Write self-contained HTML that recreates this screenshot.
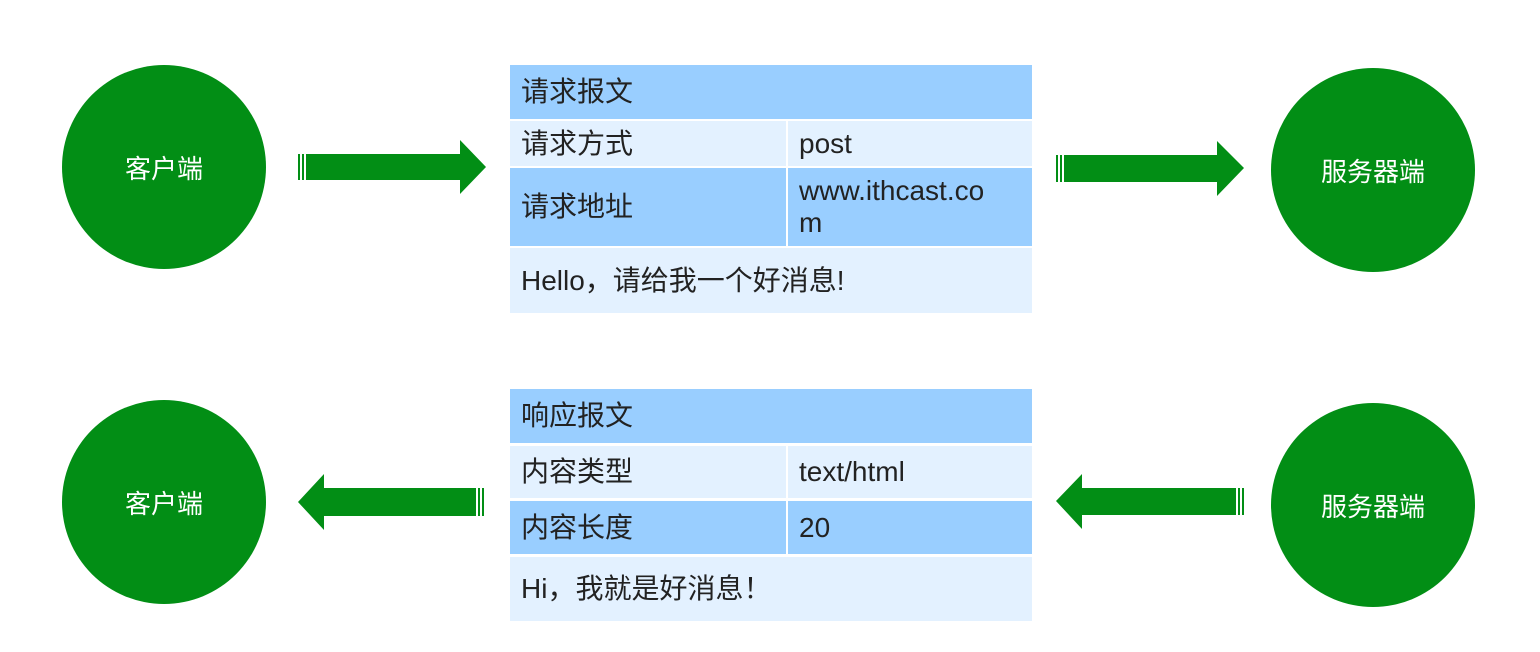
<!DOCTYPE html>
<html><head><meta charset="utf-8"><style>
html,body{margin:0;padding:0;background:#fff;width:1540px;height:652px;overflow:hidden;position:relative;font-family:"Liberation Sans","Noto Sans CJK SC",sans-serif;}
.c{position:absolute;width:204px;height:204px;border-radius:50%;background:#028e15;color:#fff;font-size:26px;display:flex;align-items:center;justify-content:center;}
.b{position:absolute;box-sizing:border-box;padding-left:11px;font-size:28px;color:#222;display:flex;align-items:center;line-height:32px;}
.d{background:#99ceff}.l{background:#e3f1ff}
svg{position:absolute;left:0;top:0}
</style></head><body>
<div class="c" style="left:62px;top:65px">客户端</div>
<div class="c" style="left:1271px;top:68px">服务器端</div>
<div class="c" style="left:62px;top:400px">客户端</div>
<div class="c" style="left:1271px;top:403px">服务器端</div>
<svg width="1540" height="652" fill="#028e15">
<rect x="298" y="154" width="2" height="26"/><rect x="302" y="154" width="2" height="26"/>
<polygon points="306,154 460,154 460,140 486,167 460,194 460,180 306,180"/>
<rect x="1056" y="155" width="2" height="27"/><rect x="1060" y="155" width="2" height="27"/>
<polygon points="1064,155 1217,155 1217,141 1244,168 1217,196 1217,182 1064,182"/>
<rect x="482" y="488" width="2" height="28"/><rect x="478" y="488" width="2" height="28"/>
<polygon points="476,488 324,488 324,474 298,502 324,530 324,516 476,516"/>
<rect x="1242" y="488" width="2" height="27"/><rect x="1238" y="488" width="2" height="27"/>
<polygon points="1236,488 1082,488 1082,474 1056,501 1082,529 1082,515 1236,515"/>
</svg>
<div class="b d" style="left:510px;top:65px;width:522px;height:54px">请求报文</div>
<div class="b l" style="left:510px;top:121px;width:276px;height:45px">请求方式</div>
<div class="b l" style="left:788px;top:121px;width:244px;height:45px">post</div>
<div class="b d" style="left:510px;top:168px;width:276px;height:78px">请求地址</div>
<div class="b d" style="left:788px;top:168px;width:244px;height:78px">www.ithcast.co<br>m</div>
<div class="b l" style="left:510px;top:248px;width:522px;height:65px">Hello，请给我一个好消息!</div>
<div class="b d" style="left:510px;top:389px;width:522px;height:54px">响应报文</div>
<div class="b l" style="left:510px;top:446px;width:276px;height:52px">内容类型</div>
<div class="b l" style="left:788px;top:446px;width:244px;height:52px">text/html</div>
<div class="b d" style="left:510px;top:501px;width:276px;height:53px">内容长度</div>
<div class="b d" style="left:788px;top:501px;width:244px;height:53px">20</div>
<div class="b l" style="left:510px;top:557px;width:522px;height:64px">Hi，我就是好消息！</div>
</body></html>
